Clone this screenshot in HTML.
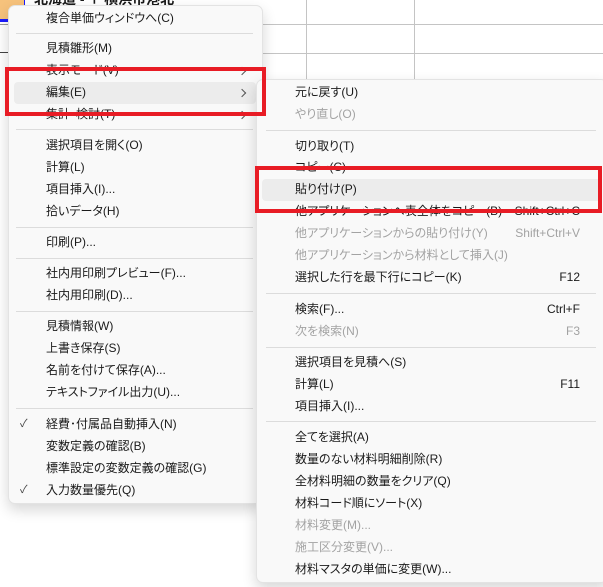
<!DOCTYPE html>
<html><head><meta charset="utf-8"><style>
*{margin:0;padding:0;box-sizing:border-box}
body{width:603px;height:587px;background:#fff;position:relative;overflow:hidden;font-family:"Liberation Sans","Noto Sans CJK JP",sans-serif;font-size:12px;color:#1a1a1a;font-feature-settings:"palt"}
.a{position:absolute}
.m{position:absolute;background:#f9f9f9;border:1px solid #e3e3e3;border-radius:7px;box-shadow:0 6px 14px rgba(0,0,0,.16)}
.t{position:absolute;white-space:nowrap;line-height:16px}
.d{color:#a3a3a3}
.s{position:absolute;height:1px;background:#dcdcdc}
.k{position:absolute;white-space:nowrap;line-height:16px;text-align:right;width:120px}
.r{position:absolute;border:4px solid #e81c25}
.c{position:absolute;width:6px;height:6px;border-right:1.2px solid #555;border-top:1.2px solid #555;transform:rotate(45deg)}
</style></head><body>
<div class="a" style="left:0;top:0;width:24px;height:22px;background:#f6c27c;border-bottom:3px solid #1a1aff"></div>
<div class="a" style="left:24px;top:0;width:1px;height:22px;background:#1a1aff"></div>
<div class="a" style="left:0;top:24px;width:24px;height:1px;background:#999"></div>
<div class="a" style="left:0;top:52px;width:24px;height:1px;background:#444"></div>
<div class="a" style="left:262px;top:24px;width:341px;height:1px;background:#c4c4c4"></div>
<div class="a" style="left:262px;top:53px;width:341px;height:1px;background:#c4c4c4"></div>
<div class="a" style="left:306px;top:0;width:1px;height:80px;background:#c4c4c4"></div>
<div class="a" style="left:414px;top:0;width:1px;height:80px;background:#c4c4c4"></div>
<div class="t" style="left:34px;top:-9px;font-size:14px;font-weight:bold">北海道 - 〒 横浜市港北</div>

<div class="m" style="left:8px;top:5px;width:255px;height:499px"></div>
<div class="a" style="left:14px;top:82px;width:242px;height:22px;background:#ececec;border-radius:4px"></div>
<div class="t" style="left:46px;top:10px">複合単価ウィンドウへ(C)</div>
<div class="s" style="left:16px;top:33px;width:237px"></div>
<div class="t" style="left:46px;top:40px">見積雛形(M)</div>
<div class="t" style="left:46px;top:62px">表示モード(V)</div><div class="c" style="left:239px;top:68px"></div>
<div class="t" style="left:46px;top:84px">編集(E)</div><div class="c" style="left:239px;top:90px"></div>
<div class="t" style="left:46px;top:106px">集計・検討(T)</div><div class="c" style="left:239px;top:112px"></div>
<div class="s" style="left:16px;top:129px;width:237px"></div>
<div class="t" style="left:46px;top:137px">選択項目を開く(O)</div>
<div class="t" style="left:46px;top:159px">計算(L)</div>
<div class="t" style="left:46px;top:181px">項目挿入(I)...</div>
<div class="t" style="left:46px;top:203px">拾いデータ(H)</div>
<div class="s" style="left:16px;top:227px;width:237px"></div>
<div class="t" style="left:46px;top:234px">印刷(P)...</div>
<div class="s" style="left:16px;top:258px;width:237px"></div>
<div class="t" style="left:46px;top:265px">社内用印刷プレビュー(F)...</div>
<div class="t" style="left:46px;top:287px">社内用印刷(D)...</div>
<div class="s" style="left:16px;top:311px;width:237px"></div>
<div class="t" style="left:46px;top:318px">見積情報(W)</div>
<div class="t" style="left:46px;top:340px">上書き保存(S)</div>
<div class="t" style="left:46px;top:362px">名前を付けて保存(A)...</div>
<div class="t" style="left:46px;top:384px">テキストファイル出力(U)...</div>
<div class="s" style="left:16px;top:408px;width:237px"></div>
<div class="t" style="left:20px;top:416px;font-size:11px;color:#444">✓</div><div class="t" style="left:46px;top:416px">経費･付属品自動挿入(N)</div>
<div class="t" style="left:46px;top:438px">変数定義の確認(B)</div>
<div class="t" style="left:46px;top:460px">標準設定の変数定義の確認(G)</div>
<div class="t" style="left:20px;top:482px;font-size:11px;color:#444">✓</div><div class="t" style="left:46px;top:482px">入力数量優先(Q)</div>

<div class="m" style="left:256px;top:79px;width:352px;height:504px"></div>
<div class="a" style="left:262px;top:179px;width:340px;height:22px;background:#ececec;border-radius:4px"></div>
<div class="t" style="left:295px;top:84px">元に戻す(U)</div>
<div class="t d" style="left:295px;top:106px">やり直し(O)</div>
<div class="s" style="left:266px;top:130px;width:330px"></div>
<div class="t" style="left:295px;top:138px">切り取り(T)</div>
<div class="t" style="left:295px;top:159px">コピー(C)</div>
<div class="t" style="left:295px;top:181px">貼り付け(P)</div>
<div class="t" style="left:295px;top:203px">他アプリケーションへ表全体をコピー(B)</div><div class="k" style="left:460px;top:203px">Shift+Ctrl+C</div>
<div class="t d" style="left:295px;top:225px">他アプリケーションからの貼り付け(Y)</div><div class="k d" style="left:460px;top:225px">Shift+Ctrl+V</div>
<div class="t d" style="left:295px;top:247px">他アプリケーションから材料として挿入(J)</div>
<div class="t" style="left:295px;top:269px">選択した行を最下行にコピー(K)</div><div class="k" style="left:460px;top:269px">F12</div>
<div class="s" style="left:266px;top:293px;width:330px"></div>
<div class="t" style="left:295px;top:301px">検索(F)...</div><div class="k" style="left:460px;top:301px">Ctrl+F</div>
<div class="t d" style="left:295px;top:323px">次を検索(N)</div><div class="k d" style="left:460px;top:323px">F3</div>
<div class="s" style="left:266px;top:347px;width:330px"></div>
<div class="t" style="left:295px;top:354px">選択項目を見積へ(S)</div>
<div class="t" style="left:295px;top:376px">計算(L)</div><div class="k" style="left:460px;top:376px">F11</div>
<div class="t" style="left:295px;top:398px">項目挿入(I)...</div>
<div class="s" style="left:266px;top:421px;width:330px"></div>
<div class="t" style="left:295px;top:429px">全てを選択(A)</div>
<div class="t" style="left:295px;top:451px">数量のない材料明細削除(R)</div>
<div class="t" style="left:295px;top:473px">全材料明細の数量をクリア(Q)</div>
<div class="t" style="left:295px;top:495px">材料コード順にソート(X)</div>
<div class="t d" style="left:295px;top:517px">材料変更(M)...</div>
<div class="t d" style="left:295px;top:539px">施工区分変更(V)...</div>
<div class="t" style="left:295px;top:561px">材料マスタの単価に変更(W)...</div>

<div class="r" style="left:5px;top:67px;width:261px;height:49px"></div>
<div class="r" style="left:255px;top:166px;width:347px;height:47px"></div>
</body></html>
